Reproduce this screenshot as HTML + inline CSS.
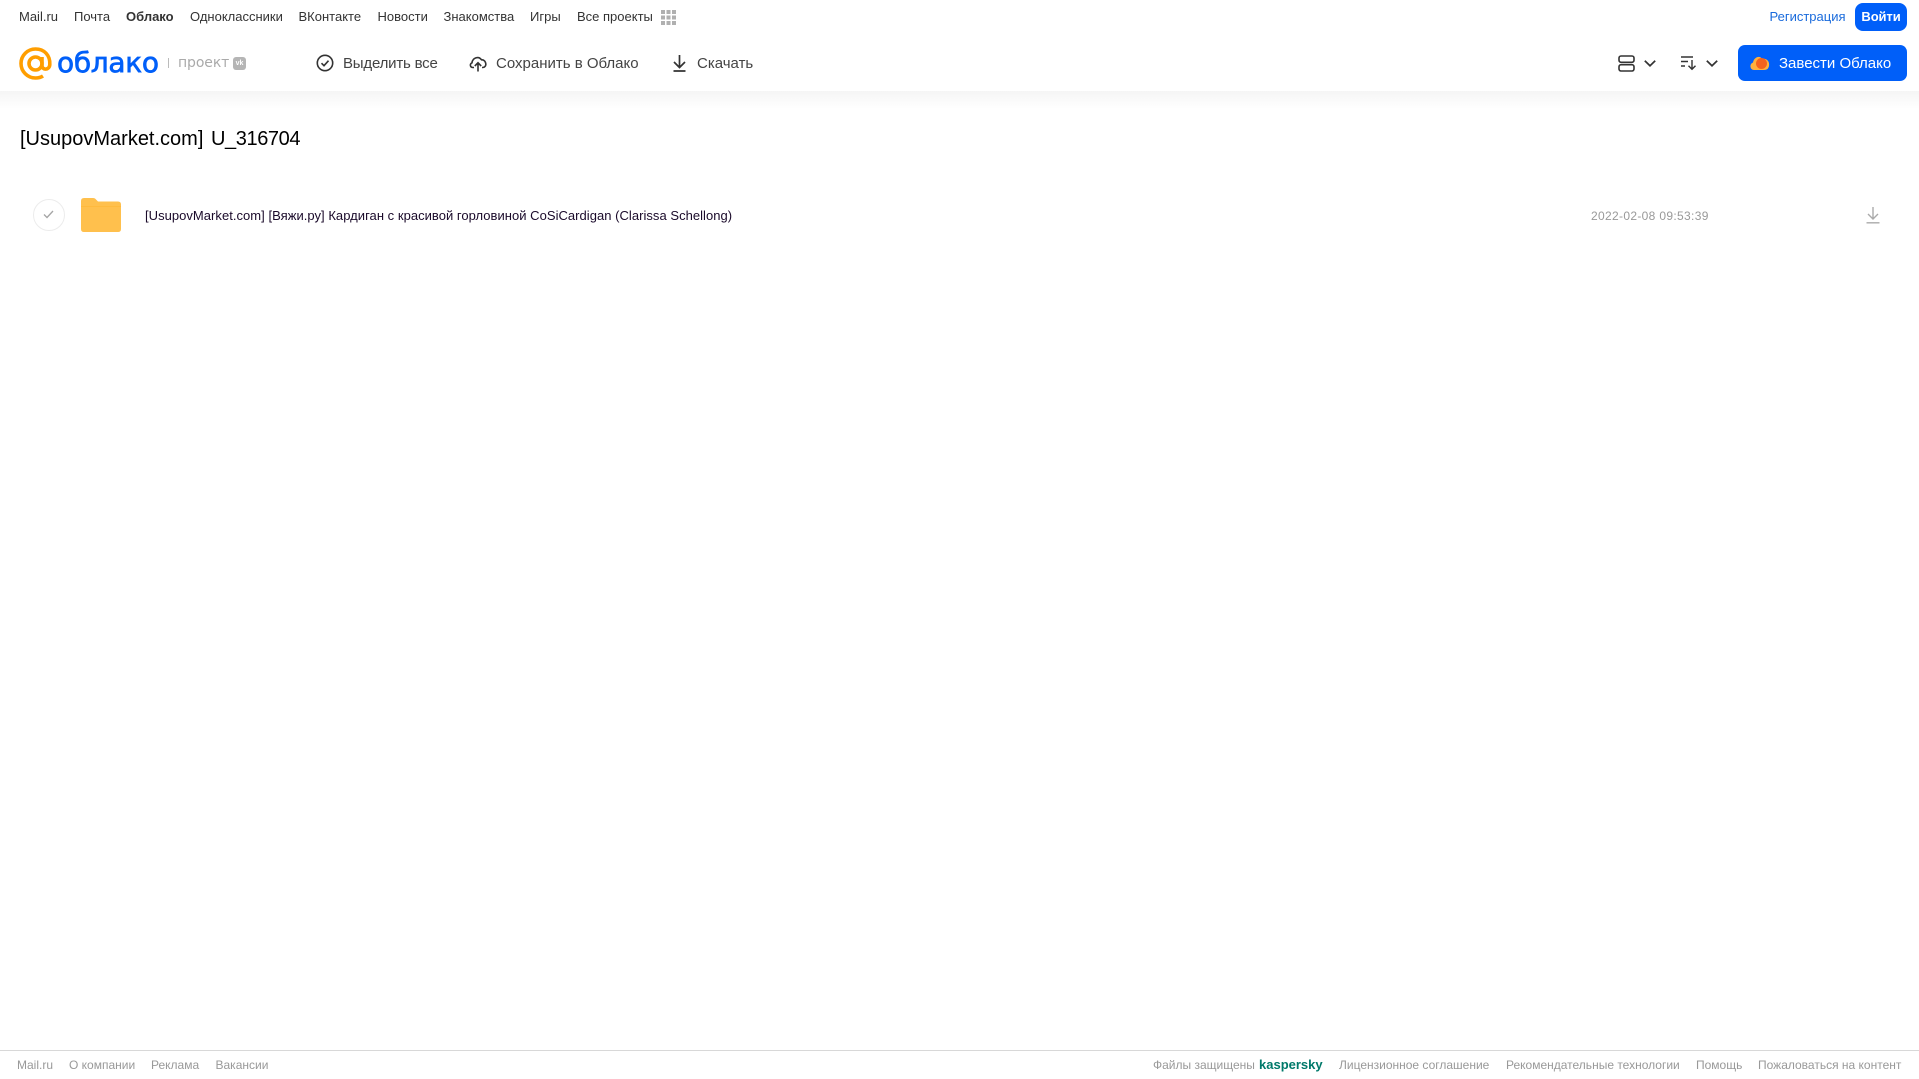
<!DOCTYPE html>
<html lang="ru"><head><meta charset="utf-8"><title>Облако</title>
<style>
html,body{margin:0;padding:0;background:#fff;width:1919px;height:1079px;overflow:hidden;font-family:"Liberation Sans",sans-serif}
.t{position:absolute;white-space:nowrap;line-height:16px}
.n{font-size:13px;color:#333;top:9px}
.b{font-size:15px;color:#444;top:56px;line-height:16px}
.f{font-size:12px;color:#999;top:1057px}
svg{position:absolute;overflow:visible}
</style></head><body>
<div style="position:absolute;left:0;top:91px;width:1919px;height:18px;background:linear-gradient(#f5f5f5,#fff)"></div>
<div style="position:absolute;left:0;top:0;width:1919px;height:91px;background:#fff"></div>

<span class="t n" style="left:19px">Mail.ru</span>
<span class="t n" style="left:74px">Почта</span>
<span class="t n" style="left:126px;font-weight:bold">Облако</span>
<span class="t n" style="left:190px">Одноклассники</span>
<span class="t n" style="left:298.500px">ВКонтакте</span>
<span class="t n" style="left:377.500px">Новости</span>
<span class="t n" style="left:443.500px">Знакомства</span>
<span class="t n" style="left:530px">Игры</span>
<span class="t n" style="left:577px">Все проекты</span>
<svg style="left:661px;top:10px" width="15" height="15" fill="#b0b0b0"><rect x="0" y="0" width="4" height="4"/><rect x="5.500" y="0" width="4" height="4"/><rect x="11" y="0" width="4" height="4"/><rect x="0" y="5.500" width="4" height="4"/><rect x="5.500" y="5.500" width="4" height="4"/><rect x="11" y="5.500" width="4" height="4"/><rect x="0" y="11" width="4" height="4"/><rect x="5.500" y="11" width="4" height="4"/><rect x="11" y="11" width="4" height="4"/></svg>
<span class="t" style="left:1769.500px;top:9px;font-size:13px;color:#1a6bdc">Регистрация</span>
<div style="position:absolute;left:1855px;top:3px;width:52px;height:28px;border-radius:8px;background:#005ff9;color:#fff;font-size:13px;font-weight:bold;text-align:center;line-height:28px;letter-spacing:-.1px">Войти</div>

<svg style="left:19px;top:47px" width="33" height="33" viewBox="0 0 33 33" fill="none" stroke="#ff9e00" stroke-width="3.600"><circle cx="16.500" cy="16.500" r="6.500"/><path d="M23 10v8.500c0 5 7.500 5 7.800-1C31.300 8 25 2 16.500 2 8.500 2 2 8.500 2 16.500S8.500 31 16.500 31c3 0 5.500-.7 7.500-2"/></svg>
<span class="t" style="left:57px;top:45px;font-size:28px;line-height:36px;color:#005ff9;font-family:'DejaVu Sans',sans-serif;letter-spacing:-.3px;-webkit-text-stroke:.7px #005ff9">облако</span>
<div style="position:absolute;left:168px;top:58px;width:1px;height:10px;background:#bbb"></div>
<span class="t" style="left:178px;top:55px;color:#aaa;font-family:'DejaVu Sans',sans-serif;font-size:14px;letter-spacing:-.1px">проект</span>
<div style="position:absolute;left:233px;top:57px;width:13px;height:13px;border-radius:3px;background:#b5b5b5;color:#fff;font-size:7px;font-weight:bold;text-align:center;line-height:13px">vk</div>

<svg style="left:316px;top:54px" width="18" height="18" viewBox="0 0 18 18" fill="none" stroke="#333" stroke-width="1.600"><circle cx="9" cy="9" r="7.700"/><path d="M5.500 9.200l2.500 2.500 4.500-5"/></svg>
<span class="t b" style="left:343px;letter-spacing:-.2px">Выделить все</span>
<svg style="left:469px;top:55px" width="18" height="17" viewBox="0 0 18 17" fill="none" stroke="#333" stroke-width="1.600"><path d="M5 12.500H4C1 12.500.5 9 3 7.800 3.500 3 9.500 .5 12.500 4.800 16 4.500 18 9 16 11.500c-.5.600-1.200 1-2.500 1H13"/><path d="M9 16.500V8M5.800 11L9 7.800 12.200 11"/></svg>
<span class="t b" style="left:496px">Сохранить в Облако</span>
<svg style="left:671.500px;top:54px" width="15" height="18" viewBox="0 0 15 18" fill="none" stroke="#333" stroke-width="1.700"><path d="M7.500 1v12M2 8l5.500 5.500L13 8M1.500 17h12"/></svg>
<span class="t b" style="left:697px">Скачать</span>

<svg style="left:1618px;top:55px" width="17" height="17" viewBox="0 0 17 17" fill="none" stroke="#333" stroke-width="1.600"><rect x="1" y="1" width="15" height="6.300" rx="2"/><rect x="1" y="9.700" width="15" height="6.300" rx="2"/></svg>
<svg style="left:1644px;top:60px" width="12" height="7" viewBox="0 0 12 7" fill="none" stroke="#333" stroke-width="1.700"><path d="M.8.800L6 5.800 11.200.800"/></svg>
<svg style="left:1681px;top:56px" width="16" height="15" viewBox="0 0 16 15" fill="none" stroke="#333" stroke-width="1.400"><path d="M0 1h12M0 5.500h7M0 10h4M11 4v9M7.500 9.700L11 13.300l3.500-3.600"/></svg>
<svg style="left:1706px;top:60px" width="12" height="7" viewBox="0 0 12 7" fill="none" stroke="#333" stroke-width="1.700"><path d="M.8.800L6 5.800 11.200.800"/></svg>
<div style="position:absolute;left:1738px;top:45px;width:169px;height:36px;border-radius:7px;background:#005ff9"></div>
<svg style="left:1750px;top:54px" width="20" height="17" viewBox="0 0 20 17"><path d="M4 16C0 16-1 10 3 8.500 4 3 10 1 12 5c4-1 8 2 7 7-.5 2.500-2 4-5 4z" fill="#ffb13d"/><circle cx="11.500" cy="9.500" r="5.500" fill="#f4631e"/></svg>
<span class="t" style="left:1779px;top:56px;font-size:15px;color:#fff">Завести Облако</span>

<span class="t" style="left:20px;top:127px;font-size:20px;line-height:24px;color:#000">[UsupovMarket.com]</span>
<span class="t" style="left:211px;top:127px;font-size:20px;line-height:24px;color:#000;letter-spacing:-.4px">U_316704</span>

<div style="position:absolute;left:33px;top:199px;width:30px;height:30px;border:1px solid #ececec;border-radius:50%"></div>
<svg style="left:43px;top:210px" width="11" height="9" viewBox="0 0 11 9" fill="none" stroke="#a5a5a5" stroke-width="1.300"><path d="M1 4.500l3 3L10 1"/></svg>
<svg style="left:81px;top:198px" width="40" height="34" viewBox="0 0 40 34"><path d="M0 3Q0 0 3 0h9q2 0 3 1.500L17 3.500h20q3 0 3 3V31q0 3-3 3H3q-3 0-3-3z" fill="#ffc04d"/><path d="M0 8.500h40" stroke="#ffb838" stroke-width=".8"/></svg>
<span class="t" style="left:145px;top:208px;font-size:13px;color:#1a0a2a;letter-spacing:.033px">[UsupovMarket.com] [Вяжи.ру] Кардиган с красивой горловиной CoSiCardigan (Clarissa Schellong)</span>
<span class="t" style="left:1591px;top:208px;font-size:12px;color:#999;letter-spacing:.33px">2022-02-08 09:53:39</span>
<svg style="left:1866px;top:206px" width="14" height="18" viewBox="0 0 14 18" fill="none" stroke="#aaa" stroke-width="1.400"><path d="M7 1v12M2 8l5 5 5-5M.5 16.800h13"/></svg>

<div style="position:absolute;left:0;top:1050px;width:1919px;height:1px;background:#d8d8d8"></div>
<span class="t f" style="left:17px">Mail.ru</span>
<span class="t f" style="left:69px">О компании</span>
<span class="t f" style="left:151px">Реклама</span>
<span class="t f" style="left:215.500px">Вакансии</span>
<span class="t f" style="left:1153px">Файлы защищены</span>
<span class="t f" style="left:1259px;color:#00796a;font-weight:bold;font-size:13px">kaspersky</span>
<span class="t f" style="left:1339px">Лицензионное соглашение</span>
<span class="t f" style="left:1506px">Рекомендательные технологии</span>
<span class="t f" style="left:1696px">Помощь</span>
<span class="t f" style="left:1758px">Пожаловаться на контент</span>
</body></html>
